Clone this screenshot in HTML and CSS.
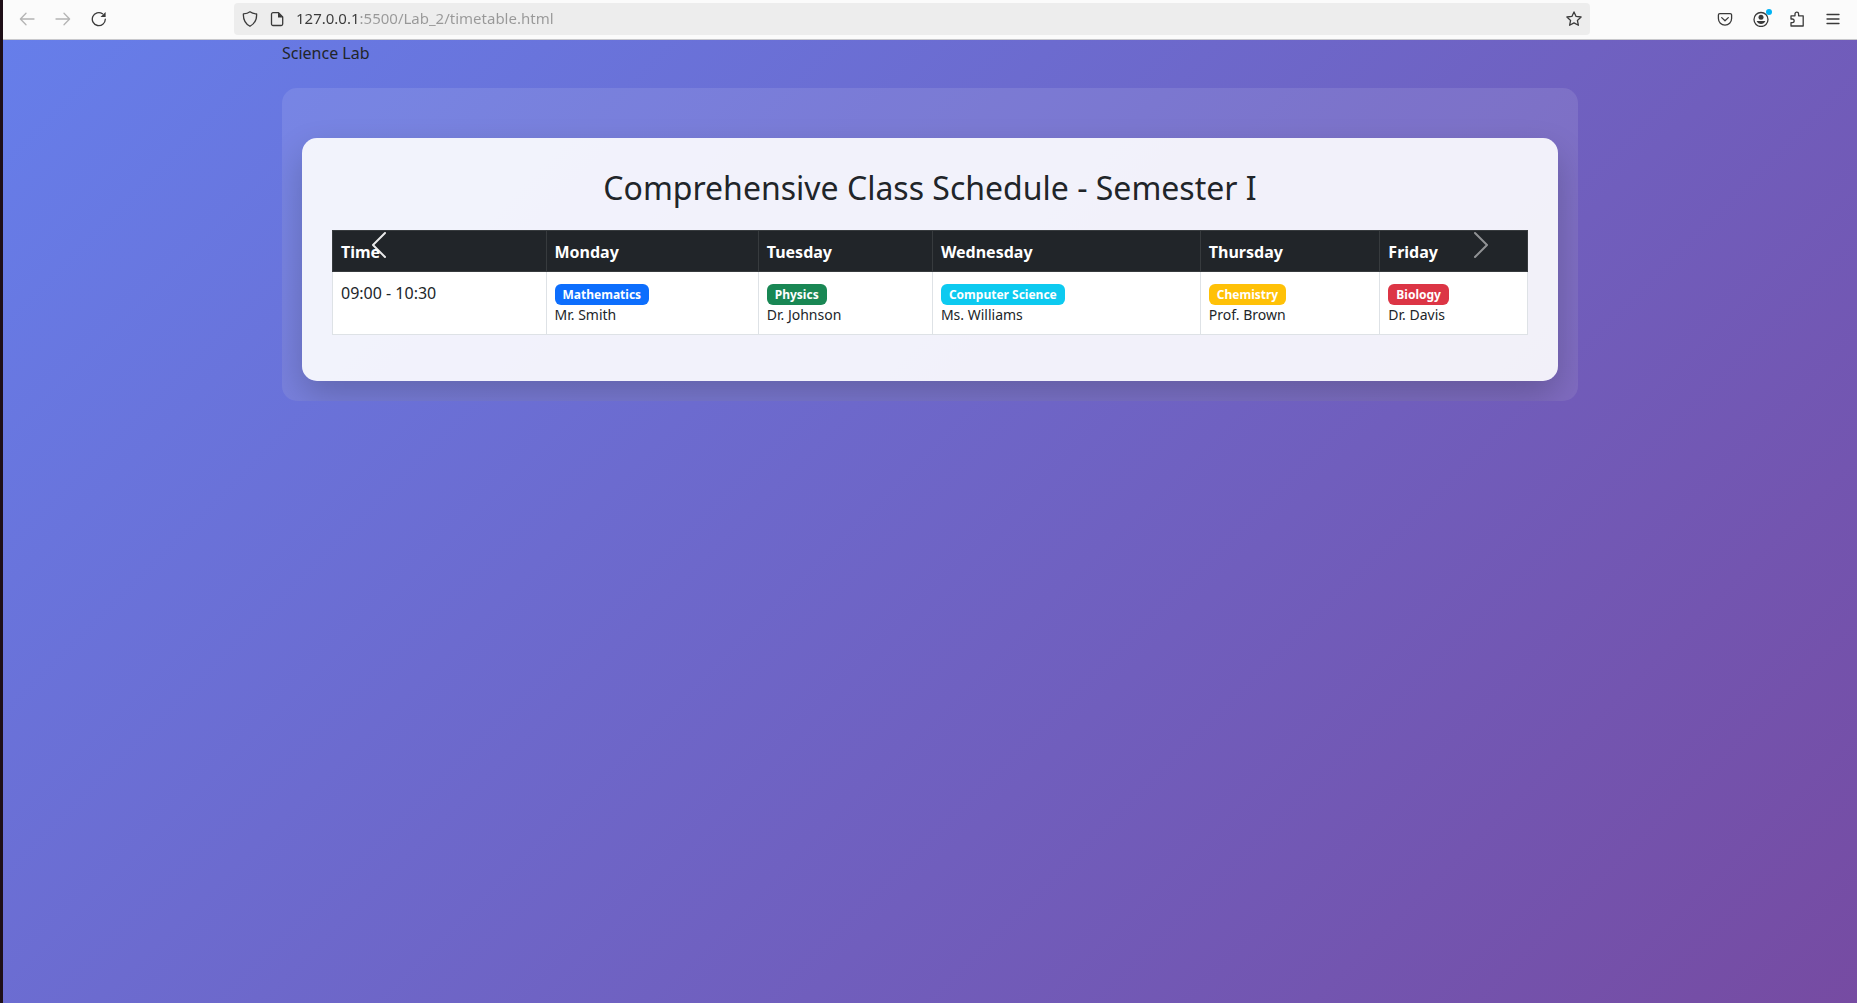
FILE: index.html
```html
<!DOCTYPE html>
<html lang="en">
<head>
<meta charset="utf-8">
<meta name="viewport" content="width=device-width, initial-scale=1">
<title>Class Schedule</title>
<link rel="stylesheet" href="styles.css">
</head>
<body>
<header class="toolbar">
  <nav class="tool-group" aria-label="History">
    <button class="tool tool-off" type="button" aria-label="Back"><svg class="icon" viewBox="0 0 16 16"><path d="M15 8H1.600M7 2.300L1.400 8L7 13.700"/></svg></button>
    <button class="tool tool-off" type="button" aria-label="Forward"><svg class="icon" viewBox="0 0 16 16"><path d="M1 8h13.400M9 2.300L14.600 8L9 13.700"/></svg></button>
    <button class="tool" type="button" aria-label="Reload"><svg class="icon" viewBox="0 0 16 16"><path d="M14.300 8.200A6.500 6.500 0 1 1 11.500 2.800"/><path class="solid" d="M14.600 1v5.100H9.500z"/></svg></button>
  </nav>
  <div class="address">
    <button class="address-tool" type="button" aria-label="Site protection"><svg class="icon" viewBox="0 0 16 16"><path d="M8 .8c1.600 1.300 3.900 2 6.600 2.100.3 5.600-1.800 9.700-6.600 12.400C3.200 12.600 1.100 8.500 1.400 2.900 4.100 2.800 6.400 2.100 8 .8z"/></svg></button>
    <button class="address-tool" type="button" aria-label="Site information"><svg class="icon" viewBox="0 0 16 16"><path d="M4 1.700h5.500l4.200 4.200V13a1.500 1.500 0 0 1-1.500 1.500H4A1.500 1.500 0 0 1 2.500 13V3.200A1.500 1.500 0 0 1 4 1.700z"/><path class="solid" d="M9 1.500v5h5z"/></svg></button>
    <input class="url" type="text" aria-label="Address" value="127.0.0.1:5500/Lab_2/timetable.html">
    <button class="address-tool" type="button" aria-label="Bookmark"><svg class="icon" viewBox="0 0 16 16"><path d="M8 .9l2.100 4.500 5 .6-3.700 3.400 1 4.900L8 11.900l-4.400 2.400 1-4.900L.9 6l5-.6z"/></svg></button>
  </div>
  <nav class="tool-group" aria-label="Browser tools">
    <button class="tool" type="button" aria-label="Pocket"><svg class="icon" viewBox="0 0 16 16"><path d="M2.800 2.600h10.400a1.400 1.400 0 0 1 1.400 1.400v3.500a6.600 6.600 0 0 1-13.200 0V4a1.400 1.400 0 0 1 1.400-1.400zM4.700 6.600L8 9.700l3.300-3.100"/></svg></button>
    <button class="tool account" type="button" aria-label="Account"><svg class="icon" viewBox="0 0 16 16"><circle cx="8" cy="8.500" r="7"/><circle class="solid" cx="8" cy="6.300" r="2.500"/><path class="solid" d="M3.600 10h8.800c-.8 2-2.500 3-4.400 3s-3.600-1-4.400-3z"/></svg></button>
    <button class="tool" type="button" aria-label="Extensions"><svg class="icon" viewBox="0 0 16 16"><path d="M2 15V11.700h1.300a1.700 1.700 0 0 0 0-3.700H2V4.800h4V2.900a1.800 1.800 0 0 1 3.600 0v1.900h4.600V15z"/></svg></button>
    <button class="tool" type="button" aria-label="Menu"><svg class="icon" viewBox="0 0 16 16"><path d="M2 3.500h12M2 8h12M2 12.500h12"/></svg></button>
  </nav>
</header>
<main class="page">
  <div class="container">
    <div class="intro">Science Lab</div>
    <section class="carousel" aria-label="Timetable">
      <article class="card">
        <h2 class="title">Comprehensive Class Schedule - Semester I</h2>
        <table class="schedule">
          <thead>
            <tr><th>Time</th><th>Monday</th><th>Tuesday</th><th>Wednesday</th><th>Thursday</th><th>Friday</th></tr>
          </thead>
          <tbody>
            <tr>
              <td>09:00 - 10:30</td>
              <td><div class="lesson"><span class="badge blue">Mathematics</span><small>Mr. Smith</small></div></td>
              <td><div class="lesson"><span class="badge green">Physics</span><small>Dr. Johnson</small></div></td>
              <td><div class="lesson"><span class="badge cyan">Computer Science</span><small>Ms. Williams</small></div></td>
              <td><div class="lesson"><span class="badge yellow">Chemistry</span><small>Prof. Brown</small></div></td>
              <td><div class="lesson"><span class="badge red">Biology</span><small>Dr. Davis</small></div></td>
            </tr>
          </tbody>
        </table>
      </article>
      <button class="control control-prev" type="button" aria-label="Previous"><svg class="chevron" viewBox="0 0 16 16"><path d="M11.354 1.646a.5.5 0 0 1 0 .708L5.707 8l5.647 5.646a.5.5 0 0 1-.708.708l-6-6a.5.5 0 0 1 0-.708l6-6a.5.5 0 0 1 .708 0z"/></svg></button>
      <button class="control control-next" type="button" aria-label="Next"><svg class="chevron" viewBox="0 0 16 16"><path d="M4.646 1.646a.5.5 0 0 1 .708 0l6 6a.5.5 0 0 1 0 .708l-6 6a.5.5 0 0 1-.708-.708L10.293 8 4.646 2.354a.5.5 0 0 1 0-.708z"/></svg></button>
    </section>
  </div>
</main>
</body>
</html>
```
FILE: styles.css
```css
* { box-sizing: border-box; }

body {
  display: flex;
  flex-direction: column;
  min-height: 100vh;
  margin: 0;
  border-left: 3px solid #1e0f17;
  color: #212529;
  font: 16px/24px "Noto Sans", sans-serif;
}

button {
  padding: 0;
  border: 0;
  background: none;
  color: inherit;
  font: inherit;
}

/* Browser toolbar */
.toolbar {
  display: flex;
  align-items: center;
  gap: 119px;
  height: 40px;
  padding: 0 8px 1px;
  border-bottom: 1px solid #c8c8cc;
  background: #fbfbfb;
  color: #3a3a3a;
}
.tool-group { display: flex; gap: 4px; }
.tool {
  display: grid;
  place-items: center;
  width: 32px;
  height: 32px;
}
.tool-off { color: #b4b4b4; }
.icon {
  display: block;
  width: 16px;
  height: 16px;
  fill: none;
  stroke: currentColor;
  stroke-width: 1.3;
  stroke-linejoin: round;
  stroke-linecap: round;
}
.solid { fill: currentColor; stroke: none; }
.account { position: relative; }
.account::after {
  content: "";
  position: absolute;
  top: 6px;
  right: 5px;
  width: 6px;
  height: 6px;
  border-radius: 50%;
  background: #00b3f4;
}
.address {
  display: flex;
  flex: 1;
  align-items: center;
  min-width: 0;
  height: 32px;
  padding: 0 8px;
  border-radius: 4px;
  background: #ededed;
}
.address-tool { flex: none; margin-right: 11px; }
.address-tool:last-child { margin-right: 0; }
.url {
  flex: 1;
  min-width: 0;
  padding: 0 0 2px;
  border: 0;
  outline: 0;
  background: linear-gradient(to right, #3a3a3a 62px, #989898 62px) text;
  color: transparent;
  font: 15px/24px "Noto Sans", sans-serif;
}

/* Timetable page */
.page {
  flex: 1;
  background: linear-gradient(135deg, #667eea 0%, #764ba2 100%);
}
.container {
  max-width: 1320px;
  margin: 0 auto;
  padding: 0 12px;
}
.intro { line-height: 26px; }
.carousel {
  position: relative;
  overflow: hidden;
  margin-top: 22px;
  padding: 50px 20px 20px;
  border-radius: 15px;
  background: rgba(255, 255, 255, 0.1);
}
.card {
  padding: 30px;
  border-radius: 15px;
  background: rgba(255, 255, 255, 0.9);
  box-shadow: 0 15px 35px rgba(0, 0, 0, 0.2);
}
.title {
  margin: 0 0 22px;
  font-size: 32px;
  font-weight: 400;
  line-height: 40px;
  text-align: center;
}
.schedule {
  width: 100%;
  margin-bottom: 16px;
  border-collapse: collapse;
}
.schedule th,
.schedule td {
  padding: 9px 8px 7px;
  border: 1px solid #dee2e6;
  background: #fff;
  text-align: left;
  vertical-align: top;
}
.schedule th {
  border-color: #373b3e;
  background: #212529;
  color: #fff;
  font-weight: 700;
}
.lesson {
  display: flex;
  flex-direction: column;
  align-items: flex-start;
  padding: 3px 0 2px;
}
.lesson small { font-size: 14px; line-height: 20px; }
.badge {
  padding: 4px 8px;
  border-radius: 6px;
  color: #fff;
  font-size: 12px;
  font-weight: 700;
  line-height: 13px;
}
.blue { background: #0d6efd; }
.green { background: #198754; }
.cyan { background: #0dcaf0; }
.yellow { background: #ffc107; }
.red { background: #dc3545; }

.control {
  position: absolute;
  top: 0;
  bottom: 0;
  display: grid;
  place-items: center;
  width: 15%;
  color: #fff;
  opacity: 0.5;
}
.control-prev { left: 0; opacity: 0.9; }
.control-next { right: 0; }
.chevron { width: 32px; height: 32px; fill: currentColor; }
```
